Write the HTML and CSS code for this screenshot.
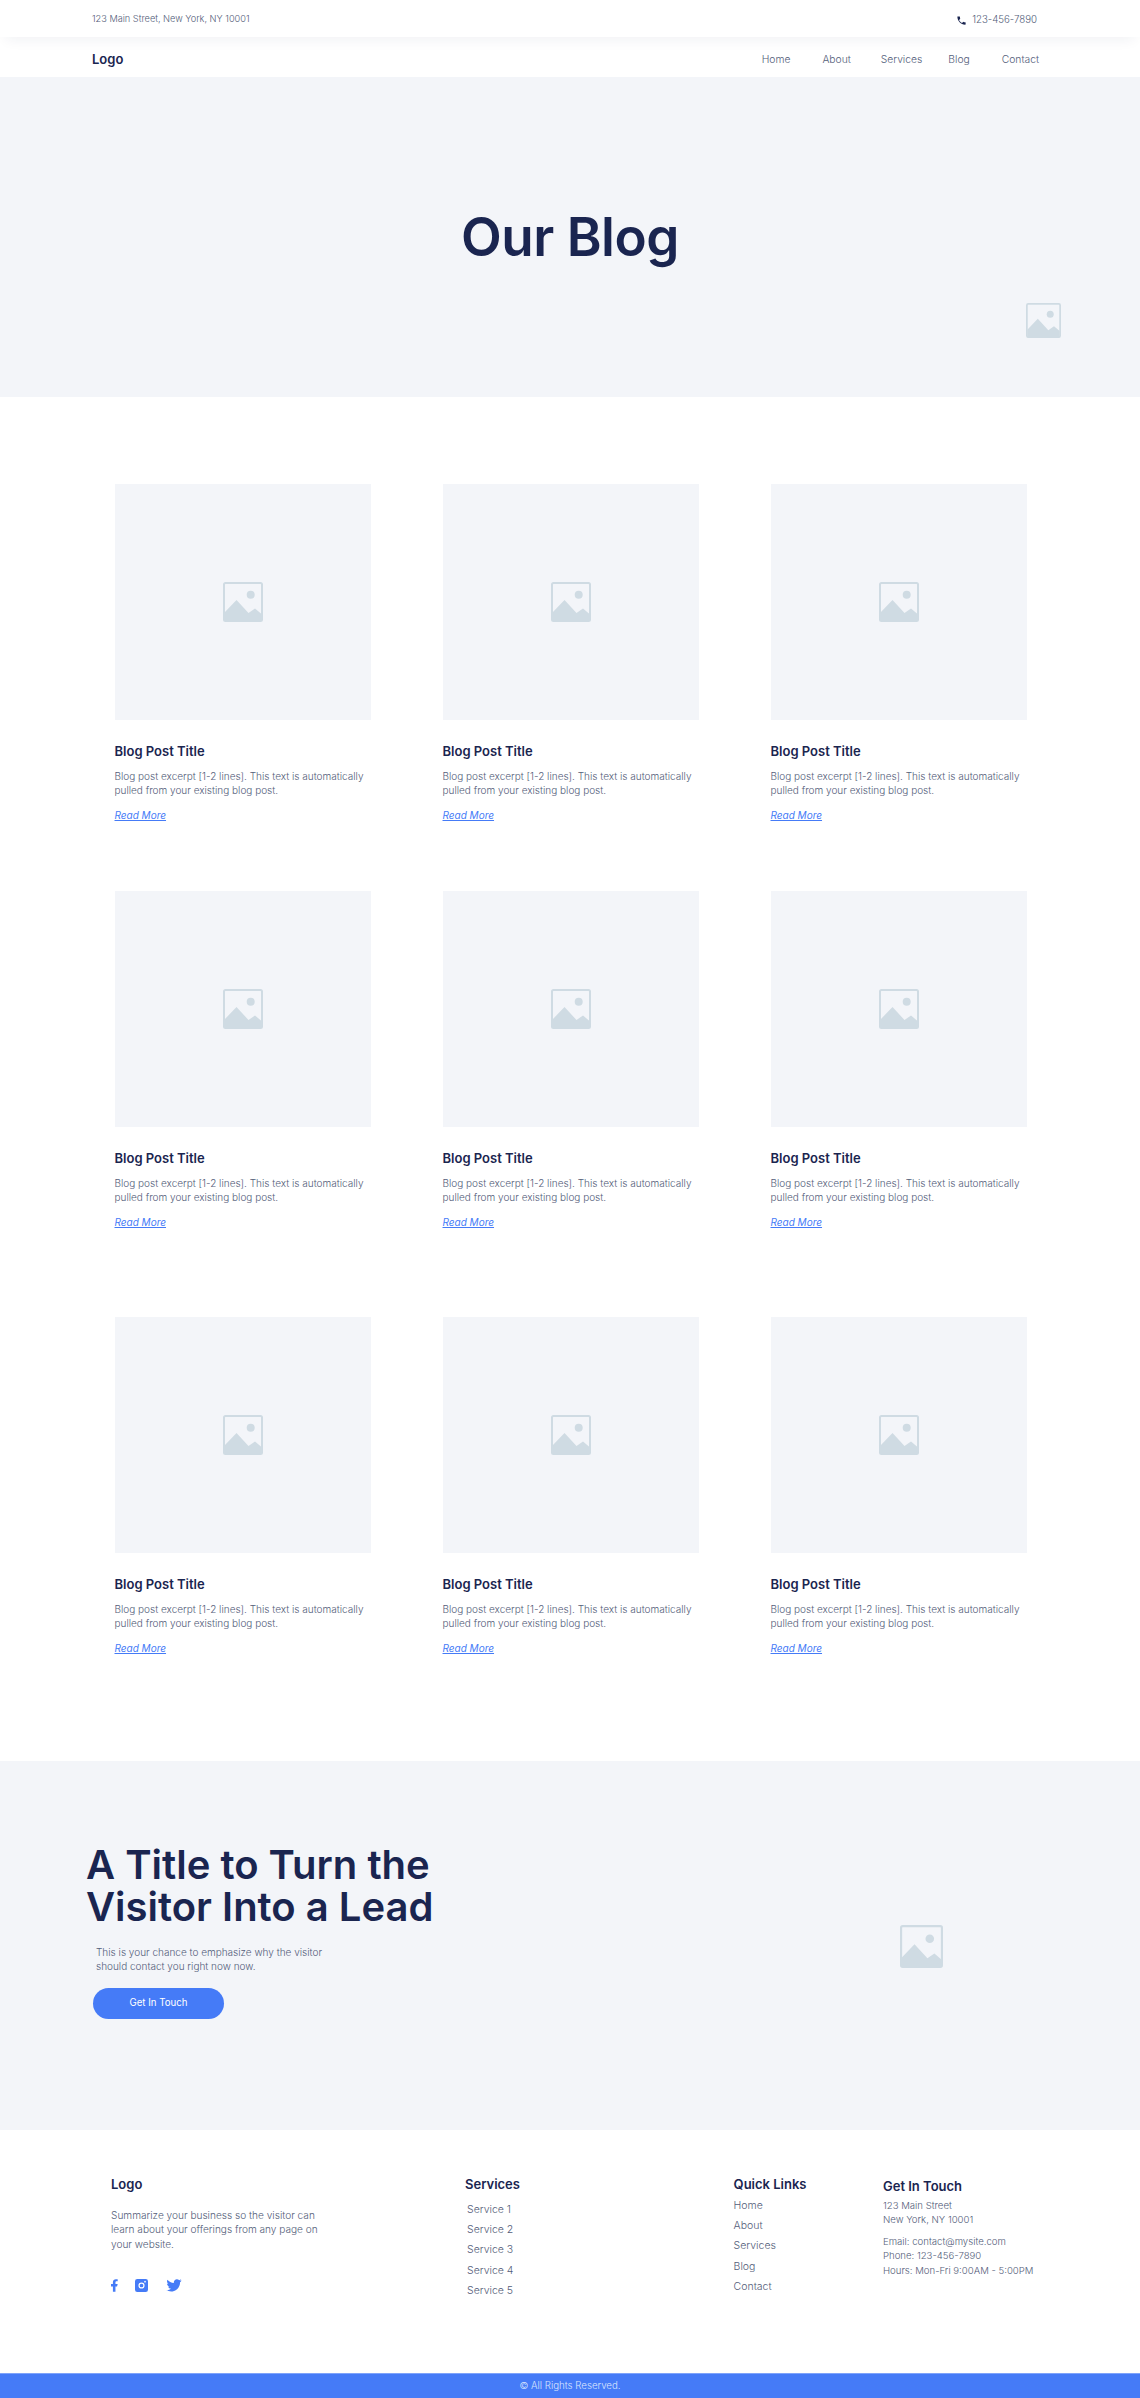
FILE: index.html
```html
<!DOCTYPE html>
<html lang="en">
<head>
<meta charset="utf-8">
<title>Our Blog</title>
<link rel="stylesheet" href="styles.css">
</head>
<body>
<svg class="sprite" width="0" height="0" aria-hidden="true">
  <symbol id="ph" viewBox="0 0 40 40">
    <rect x="1" y="1" width="38" height="38" rx="1.5" fill="none" stroke="currentColor" stroke-width="2"/>
    <circle cx="27.700" cy="12.800" r="4"/>
    <path d="M1.500 39V30.500L13.500 18L25.500 31L32 26.500L38.500 32V39Z"/>
  </symbol>
</svg>
<header class="topbar">
  <div class="topbar-in">
    <span class="addr">123 Main Street, New York, NY 10001</span>
    <span class="phone"><svg viewBox="0 0 24 24" class="phone-ic"><path d="M6.600 10.800c1.400 2.800 3.800 5.100 6.600 6.600l2.200-2.200c.3-.3.7-.4 1-.2 1.100.4 2.300.6 3.600.6.600 0 1 .4 1 1V20c0 .6-.4 1-1 1C10.600 21 3 13.400 3 4c0-.6.4-1 1-1h3.500c.6 0 1 .4 1 1 0 1.300.2 2.500.6 3.600.1.300 0 .7-.2 1z"/></svg>123-456-7890</span>
  </div>
</header>
<nav class="nav">
  <a class="logo">Logo</a>
  <ul class="menu">
    <li class="m-home">Home</li><li class="m-about">About</li><li class="m-serv">Services</li><li class="m-blog">Blog</li><li>Contact</li>
  </ul>
</nav>
<section class="hero">
  <h1>Our Blog</h1>
  <svg class="ph hero-ph"><use href="#ph"/></svg>
</section>
<main class="posts">
  <div class="row">
    <article class="card"><div class="thumb"><svg class="ph"><use href="#ph"/></svg></div><h3>Blog Post Title</h3><p>Blog post excerpt [1-2 lines]. This text is automatically pulled from your existing blog post.</p><a class="more">Read More</a></article>
    <article class="card"><div class="thumb"><svg class="ph"><use href="#ph"/></svg></div><h3>Blog Post Title</h3><p>Blog post excerpt [1-2 lines]. This text is automatically pulled from your existing blog post.</p><a class="more">Read More</a></article>
    <article class="card"><div class="thumb"><svg class="ph"><use href="#ph"/></svg></div><h3>Blog Post Title</h3><p>Blog post excerpt [1-2 lines]. This text is automatically pulled from your existing blog post.</p><a class="more">Read More</a></article>
  </div>
  <div class="row row-2">
    <article class="card"><div class="thumb"><svg class="ph"><use href="#ph"/></svg></div><h3>Blog Post Title</h3><p>Blog post excerpt [1-2 lines]. This text is automatically pulled from your existing blog post.</p><a class="more">Read More</a></article>
    <article class="card"><div class="thumb"><svg class="ph"><use href="#ph"/></svg></div><h3>Blog Post Title</h3><p>Blog post excerpt [1-2 lines]. This text is automatically pulled from your existing blog post.</p><a class="more">Read More</a></article>
    <article class="card"><div class="thumb"><svg class="ph"><use href="#ph"/></svg></div><h3>Blog Post Title</h3><p>Blog post excerpt [1-2 lines]. This text is automatically pulled from your existing blog post.</p><a class="more">Read More</a></article>
  </div>
  <div class="row row-3">
    <article class="card"><div class="thumb"><svg class="ph"><use href="#ph"/></svg></div><h3>Blog Post Title</h3><p>Blog post excerpt [1-2 lines]. This text is automatically pulled from your existing blog post.</p><a class="more">Read More</a></article>
    <article class="card"><div class="thumb"><svg class="ph"><use href="#ph"/></svg></div><h3>Blog Post Title</h3><p>Blog post excerpt [1-2 lines]. This text is automatically pulled from your existing blog post.</p><a class="more">Read More</a></article>
    <article class="card"><div class="thumb"><svg class="ph"><use href="#ph"/></svg></div><h3>Blog Post Title</h3><p>Blog post excerpt [1-2 lines]. This text is automatically pulled from your existing blog post.</p><a class="more">Read More</a></article>
  </div>
</main>
<section class="cta">
  <div class="cta-text">
    <h2>A Title to Turn the<br>Visitor Into a Lead</h2>
    <p>This is your chance to emphasize why the visitor<br>should contact you right now now.</p>
    <a class="btn">Get In Touch</a>
  </div>
  <svg class="ph cta-ph"><use href="#ph"/></svg>
</section>
<footer class="footer">
  <div class="f-col">
    <h4>Logo</h4>
    <p class="f-about">Summarize your business so the visitor can learn about your offerings from any page on your website.</p>
    <div class="social">
      <svg class="s-f" viewBox="7 2 11 20"><path d="M14 13.500h2.500l1-4H14v-2c0-1.030 0-2 2-2h1.500V2.140c-.326-.043-1.557-.14-2.857-.14C11.928 2 10 3.657 10 6.700v2.800H7v4h3V22h4v-8.500z"/></svg>
      <svg class="s-i" viewBox="0 0 14 14"><path fill-rule="evenodd" d="M2.500 0h9A2.500 2.500 0 0 1 14 2.500v9a2.500 2.500 0 0 1-2.500 2.500h-9A2.500 2.500 0 0 1 0 11.500v-9A2.500 2.500 0 0 1 2.500 0ZM7 3.700a3.300 3.300 0 1 0 0 6.600 3.300 3.300 0 0 0 0-6.600Zm0 1.300a2 2 0 1 1 0 4 2 2 0 0 1 0-4Zm3.800-3a.9.9 0 1 0 0 1.800.9.9 0 0 0 0-1.800Z"/></svg>
      <svg class="s-t" viewBox="1 4 22 17.500"><path d="M22.460 6c-.77.35-1.600.58-2.460.69.880-.53 1.560-1.370 1.880-2.380-.83.500-1.750.85-2.720 1.050C18.370 4.500 17.260 4 16 4c-2.350 0-4.270 1.920-4.270 4.290 0 .34.040.67.110.98C8.280 9.090 5.110 7.380 3 4.790c-.37.63-.58 1.370-.58 2.150 0 1.490.75 2.810 1.910 3.560-.71 0-1.370-.2-1.950-.5v.03c0 2.080 1.480 3.820 3.440 4.210a4.220 4.220 0 0 1-1.930.07 4.280 4.280 0 0 0 4 2.980 8.521 8.521 0 0 1-5.330 1.840c-.34 0-.68-.02-1.020-.06C3.440 20.290 5.700 21 8.120 21 16 21 20.330 14.460 20.330 8.790c0-.19 0-.37-.01-.56.840-.6 1.560-1.360 2.140-2.230z"/></svg>
    </div>
  </div>
  <div class="f-col">
    <h4>Services</h4>
    <ul class="f-list f-list-s"><li>Service 1</li><li>Service 2</li><li>Service 3</li><li>Service 4</li><li>Service 5</li></ul>
  </div>
  <div class="f-col">
    <h4>Quick Links</h4>
    <ul class="f-list"><li>Home</li><li>About</li><li>Services</li><li>Blog</li><li>Contact</li></ul>
  </div>
  <div class="f-col f-contact">
    <h4>Get In Touch</h4>
    <p>123 Main Street<br>New York, NY 10001</p>
    <p>Email: contact@mysite.com<br>Phone: 123-456-7890<br>Hours: Mon-Fri 9:00AM - 5:00PM</p>
  </div>
</footer>
<div class="copy">© All Rights Reserved.</div>
</body>
</html>
```
FILE: styles.css
```css
* { box-sizing: border-box; }
html, body { margin: 0; padding: 0; }
body {
  font-family: Inter, "Liberation Sans", sans-serif;
  font-weight: 300;
  font-size: 10px;
  line-height: 14.400px;
  color: #535d79;
  background: #fff;
}
h1, h2, h3, h4, p, ul { margin: 0; padding: 0; }
ul { list-style: none; }
.sprite { position: absolute; }

.topbar {
  position: relative;
  z-index: 2;
  height: 37px;
  background: #fff;
  box-shadow: 0 8px 14px -6px rgba(30, 40, 80, 0.07);
}
.topbar-in {
  height: 37px;
  padding: 0 103px 0 92px;
  display: flex;
  justify-content: space-between;
  align-items: center;
}
.addr { font-size: 9.200px; padding-top: 1px; }
.phone { display: flex; align-items: center; gap: 5px; padding-top: 3px; font-size: 9.700px; }
.phone-ic { width: 11px; height: 11px; fill: #1a2550; }

.nav {
  height: 40px;
  padding: 5px 101px 0 92px;
  display: flex;
  justify-content: space-between;
  align-items: center;
  background: #fff;
}
.logo { font-size: 13px; font-weight: 600; color: #1a2550; }
.menu { display: flex; font-size: 10.300px; }
.m-home { margin-right: 32px; }
.m-about { margin-right: 30px; }
.m-serv { margin-right: 26px; }
.m-blog { margin-right: 32px; }

.hero {
  position: relative;
  height: 320px;
  background: #f3f5f9;
  display: flex;
  align-items: center;
  justify-content: center;
}
.hero h1 {
  font-size: 53px;
  line-height: 68px;
  letter-spacing: -0.500px;
  font-weight: 600;
  color: #1a2550;
}
.ph { display: block; width: 40px; height: 40px; color: #cfdbe3; fill: #cfdbe3; }
.hero-ph { position: absolute; left: 1026px; top: 226px; width: 35px; height: 35px; }

.posts { padding: 87px 114px 0 114.500px; }
.row {
  display: grid;
  grid-template-columns: repeat(3, 256px);
  column-gap: 72px;
}
.row-2 { margin-top: 64px; }
.row-3 { margin-top: 83px; }
.card { height: 343px; }
.thumb {
  height: 236px;
  background: #f3f5f9;
  display: flex;
  align-items: center;
  justify-content: center;
}
.card h3 {
  margin-top: 21px;
  font-size: 13px;
  line-height: 20px;
  font-weight: 600;
  color: #1a2550;
}
.card p { margin-top: 8px; }
.more {
  display: inline-block;
  margin-top: 10px;
  font-size: 10px;
  font-style: italic;
  font-weight: 400;
  color: #457bf7;
  text-decoration: underline;
}

.cta {
  margin-top: 101px;
  height: 369px;
  background: #f3f5f9;
  display: flex;
  align-items: flex-start;
  padding: 83px 197px 0 86px;
  justify-content: space-between;
}
.cta h2 {
  font-size: 40px;
  line-height: 41.500px;
  font-weight: 600;
  color: #1a2550;
}
.cta p { margin: 18px 0 0 10px; font-size: 10px; }
.btn {
  display: flex;
  width: 131px;
  height: 31px;
  margin: 14px 0 0 7px;
  border-radius: 16px;
  align-items: center;
  justify-content: center;
  background: #457bf7;
  color: #fff;
  font-weight: 400;
  font-size: 9.700px;
}
.cta-ph { width: 43px; height: 43px; margin-top: 81px; }

.footer {
  height: 243px;
  padding: 45px 0 0 111px;
  display: grid;
  grid-template-columns: 354px 268.600px 149.400px 1fr;
}
.f-col h4 {
  font-size: 13px;
  line-height: 18px;
  font-weight: 600;
  color: #1a2550;
}
.f-about { width: 215px; margin-top: 15px; font-size: 10.100px; }
.social { display: flex; align-items: center; margin-top: 28px; }
.social svg { fill: #457bf7; display: block; }
.s-f { width: 7px; height: 13px; margin-right: 17px; }
.s-i { width: 13px; height: 13px; margin-right: 18px; }
.s-t { width: 16px; height: 13px; }
.f-list { margin-top: 6px; font-size: 10.500px; }
.f-list-s { margin: 10px 0 0 2px; }
.f-list li { height: 20.200px; }
.f-contact h4 { margin-top: 2px; }
.f-contact p { margin-top: 4px; font-size: 9.600px; }
.f-contact p + p { margin-top: 7px; }

.copy {
  height: 25px;
  background: #457bf7;
  border-top: 1px solid #7ea3fa;
  color: #dbe6fe;
  text-align: center;
  line-height: 24px;
  font-size: 9.700px;
}
```
